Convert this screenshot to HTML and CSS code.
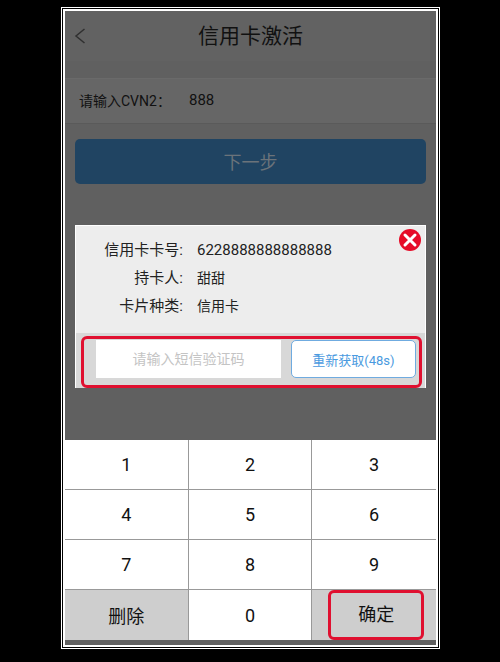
FILE: index.html
```
<!DOCTYPE html>
<html lang="zh-CN">
<head>
    <meta charset="UTF-8">
    <meta name="viewport" content="width=device-width, initial-scale=1.0">
    <title>信用卡激活</title>
    <link rel="stylesheet" href="styles.css">
</head>
<body>
    <div class="frame">
    <div class="screen">
        <header class="header">
            <button class="back" type="button" aria-label="返回">
                <svg width="12" height="18" viewBox="0 0 12 18"><path d="M10.500 2 L2 9 L10.500 16" fill="none" stroke="#303030" stroke-width="1.500"/></svg>
            </button>
            <h1>信用卡激活</h1>
        </header>

        <div class="cvn">
            <label for="cvn2">请输入CVN2：</label>
            <input type="text" id="cvn2" value="888">
        </div>
        <button class="next" type="button">下一步</button>

        <section class="dialog">
            <button class="close" type="button" aria-label="关闭">
                <svg width="22" height="22" viewBox="0 0 22 22"><circle cx="11" cy="11" r="11" fill="#e60c28"/><path d="M6 6 L16 16 M16 6 L6 16" stroke="#fff" stroke-width="3" stroke-linecap="round"/></svg>
            </button>
            <dl class="info">
                <dt>信用卡卡号:</dt>
                <dd>6228888888888888</dd>
                <dt>持卡人:</dt>
                <dd>甜甜</dd>
                <dt>卡片种类:</dt>
                <dd>信用卡</dd>
            </dl>
            <div class="verify">
                <div class="verify-row">
                    <input type="text" class="code" placeholder="请输入短信验证码" aria-label="短信验证码">
                    <button class="resend" type="button">重新获取(48s)</button>
                </div>
            </div>
        </section>

        <div class="keypad">
            <button type="button">1</button>
            <button type="button">2</button>
            <button type="button">3</button>
            <button type="button">4</button>
            <button type="button">5</button>
            <button type="button">6</button>
            <button type="button">7</button>
            <button type="button">8</button>
            <button type="button">9</button>
            <button type="button" class="gray">删除</button>
            <button type="button">0</button>
            <button type="button" class="gray"><span class="confirm">确定</span></button>
        </div>
    </div>
    </div>
</body>
</html>
```
FILE: styles.css
```
*{
    box-sizing: border-box;
}
body{
    margin: 0;
    padding: 7px 60px 13px 61px;
    min-height: 100vh;
    display: flex;
    background-color: #000;
    color: #111;
    font-family: Roboto, "Noto Sans CJK SC", sans-serif;
}
button, input{
    font-family: inherit;
    color: inherit;
    border: none;
    border-radius: 0;
    outline: none;
    padding: 0;
    margin: 0;
}
/* double white outline round the phone screen */
.frame{
    flex: 1;
    display: flex;
    border: 1px solid #fff;
    padding: 1px;
}
.screen{
    flex: 1;
    min-width: 0;
    display: flex;
    flex-direction: column;
    border: 2px solid #fff;
    padding-bottom: 5px;
    background-color: #606060;
}
.header{
    display: grid;
    grid-template-columns: 40px 1fr 40px;
    align-items: center;
    height: 50px;
    background-color: #626262;
}
.header h1{
    margin: 0;
    font-size: 21px;
    line-height: 30px;
    font-weight: 400;
    text-align: center;
}
.back{
    height: 30px;
    padding-right: 10px;
    background: none;
}
.back svg, .close svg{
    display: block;
    margin: 0 auto;
}
.cvn{
    display: flex;
    align-items: center;
    height: 46px;
    margin-top: 17px;
    padding: 0 14px 2px;
    border-top: 1px solid #6a6a6a;
    border-bottom: 1px solid #5a5a5a;
    background-color: #666;
    font-size: 14px;
}
.cvn label{
    width: 110px;
}
.cvn input{
    flex: 1;
    min-width: 0;
    background: none;
    font-size: 15px;
}
.next{
    height: 45px;
    margin: 15px 10px 0;
    padding-bottom: 2px;
    border-radius: 5px;
    background-color: #204462;
    color: #6b737a;
    font-size: 18px;
}
.dialog{
    position: relative;
    margin: 41px 10px 0;
    border: 1px solid #fff;
    border-bottom: none;
    background-color: #ededed;
}
.close{
    position: absolute;
    top: 3px;
    right: 4px;
    background: none;
}
.info{
    display: grid;
    grid-template-columns: 107px 1fr;
    column-gap: 14px;
    margin: 0;
    padding: 10px 0 13px;
    font-size: 15px;
    line-height: 28px;
    color: #222;
}
.info dt{
    text-align: right;
}
.info dd{
    margin: 0;
}
.info dd + dt ~ dd{
    font-size: 14px;
}
.verify{
    padding: 3px 3px 0 5px;
    background-color: #d8d8d8;
}
.verify-row{
    display: flex;
    gap: 10px;
    padding: 1px 3px 7px 12px;
    border: 3px solid #e01030;
    border-radius: 6px;
}
.code{
    flex: 3;
    min-width: 0;
    height: 38px;
    background-color: #fff;
    font-size: 14px;
    text-align: center;
}
.code::placeholder{
    color: #c4c4c4;
}
.resend{
    flex: 2;
    height: 38px;
    border: 1px solid #6fabe0;
    border-radius: 5px;
    background-color: #fff;
    color: #4a9ae0;
    font-size: 13px;
    white-space: nowrap;
}
.keypad{
    display: grid;
    grid-template-columns: repeat(3, 1fr);
    margin-top: auto;
}
.keypad button{
    height: 50px;
    border-right: 1px solid #999;
    border-bottom: 1px solid #999;
    background-color: #fff;
    font-size: 18px;
}
.keypad button:nth-child(3n){
    border-right: none;
}
.keypad button:nth-child(n+10){
    border-bottom: none;
}
.keypad .gray{
    background-color: #cecece;
}
.keypad .confirm{
    display: block;
    height: 50px;
    margin: 0 12px 0 16px;
    border: 3px solid #e01030;
    border-radius: 6px;
    line-height: 44px;
}
```
